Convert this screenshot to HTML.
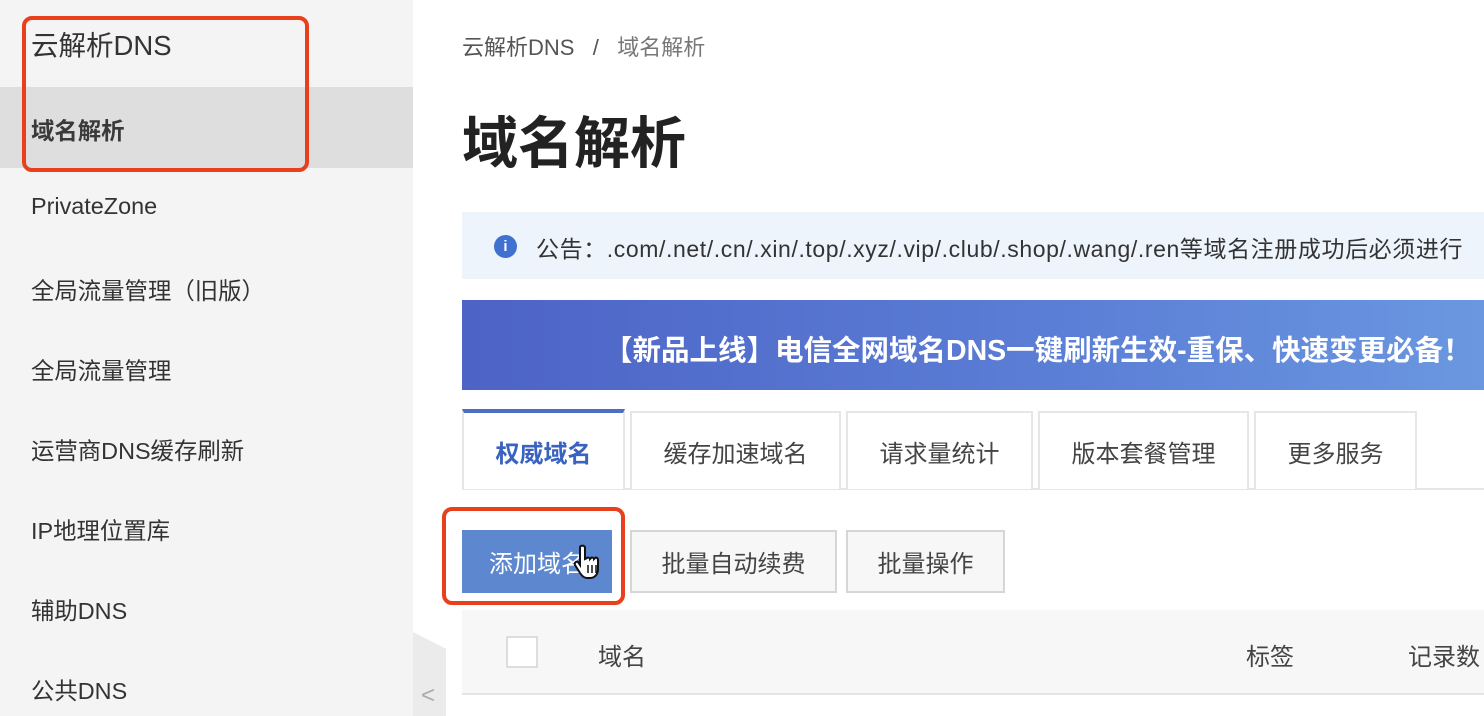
<!DOCTYPE html>
<html><head><meta charset="utf-8"><style>
*{margin:0;padding:0;box-sizing:border-box}
body{width:1484px;height:716px;overflow:hidden;background:#fff;font-family:"Liberation Sans","Noto Sans CJK SC",sans-serif;color:#333;position:relative}
.a{position:absolute;white-space:nowrap}
.side{position:absolute;left:0;top:0;width:413px;height:716px;background:#f4f4f4}
.item{position:absolute;left:31px;font-size:23.4px;color:#333}
.tab{position:absolute;top:411px;height:78px;border:2px solid #e6e6e6;border-bottom:none;font-size:24px;color:#444;display:flex;align-items:center;justify-content:center;background:#fff}
.btn{position:absolute;top:530px;height:63px;border:2px solid #d6d6d6;background:#f7f7f7;font-size:24px;color:#444;display:flex;align-items:center;justify-content:center}
</style></head><body>
<div class="side"></div>
<div class="a" style="left:0;top:87px;width:413px;height:81px;background:#dedede"></div>
<div class="item" style="top:23px;font-size:27.5px">云解析DNS</div>
<div class="item" style="top:112px;font-weight:bold;color:#3a3a3a">域名解析</div>
<div class="item" style="top:193px">PrivateZone</div>
<div class="item" style="top:272px">全局流量管理（旧版）</div>
<div class="item" style="top:352px">全局流量管理</div>
<div class="item" style="top:432px">运营商DNS缓存刷新</div>
<div class="item" style="top:512px">IP地理位置库</div>
<div class="item" style="top:592px">辅助DNS</div>
<div class="item" style="top:672px">公共DNS</div>
<div class="a" style="left:22px;top:16px;width:287px;height:156px;border:4px solid #e8401c;border-radius:10px"></div>
<div class="a" style="left:413px;top:632px;width:33px;height:84px;background:#ebebeb;clip-path:polygon(0 0,100% 20%,100% 100%,0 100%)"></div>
<div class="a" style="left:421px;top:682px;font-size:24px;color:#aaa">&lt;</div>

<div class="a" style="left:462px;top:30px;font-size:22px;color:#555">云解析DNS&nbsp;&nbsp;&nbsp;/&nbsp;&nbsp;&nbsp;<span style="color:#777">域名解析</span></div>
<div class="a" style="left:462px;top:99px;font-size:56px;font-weight:bold;color:#222">域名解析</div>
<div class="a" style="left:462px;top:212px;width:1022px;height:67px;background:#edf4fc"></div>
<div class="a" style="left:494px;top:235px;width:23px;height:23px;border-radius:50%;background:#4070d0;color:#fff;font-size:15px;font-weight:bold;text-align:center;line-height:23px">i</div>
<div class="a" style="left:536px;top:230px;font-size:23px;letter-spacing:0.6px;color:#333">公告：.com/.net/.cn/.xin/.top/.xyz/.vip/.club/.shop/.wang/.ren等域名注册成功后必须进行</div>
<div class="a" style="left:462px;top:300px;width:1022px;height:90px;background:linear-gradient(90deg,#4d63c6,#5b7fd6 60%,#6b97e0)"></div>
<div class="a" style="left:604px;top:328px;font-size:28.5px;font-weight:bold;color:#fff">【新品上线】电信全网域名DNS一键刷新生效-重保、快速变更必备！</div>

<div class="a" style="left:462px;top:488px;width:1022px;height:2px;background:#e6e6e6"></div>
<div class="tab" style="left:462px;width:163px;border-top:4px solid #4a6fc4;color:#3a63c0;font-weight:bold;height:80px;top:409px">权威域名</div>
<div class="tab" style="left:630px;width:211px">缓存加速域名</div>
<div class="tab" style="left:846px;width:187px">请求量统计</div>
<div class="tab" style="left:1038px;width:211px">版本套餐管理</div>
<div class="tab" style="left:1254px;width:163px">更多服务</div>

<div class="btn" style="left:462px;width:150px;background:#5d88cf;border-color:#5d88cf;color:#fff">添加域名</div>
<div class="btn" style="left:630px;width:207px">批量自动续费</div>
<div class="btn" style="left:846px;width:159px">批量操作</div>
<div class="a" style="left:442px;top:507px;width:183px;height:98px;border:4px solid #e8401c;border-radius:10px"></div>
<svg class="a" style="left:573px;top:543px" width="34" height="38" viewBox="0 0 34 38"><path d="M8 3c2-1 4 0 4 2v11l2-1c1-1 3 0 3 1l1-1c1-1 3 0 3 1l1-1c1-1 3 0 3 2v9c0 5-3 9-8 9h-3c-3 0-5-2-7-5l-5-8c-1-2 1-4 3-3l2 3V5c0-1 0-2 1-2z" fill="#fff" stroke="#111" stroke-width="2"/><path d="M15 22v8M19 22v8M23 22v8" stroke="#111" stroke-width="1.5"/></svg>

<div class="a" style="left:462px;top:610px;width:1022px;height:85px;background:#f7f7f7;border-bottom:2px solid #e5e5e5"></div>
<div class="a" style="left:506px;top:636px;width:32px;height:32px;background:#fff;border:2px solid #ddd"></div>
<div class="a" style="left:598px;top:637px;font-size:24px;color:#444">域名</div>
<div class="a" style="left:1246px;top:637px;font-size:24px;color:#444">标签</div>
<div class="a" style="left:1408px;top:637px;font-size:24px;color:#444">记录数</div>
</body></html>
